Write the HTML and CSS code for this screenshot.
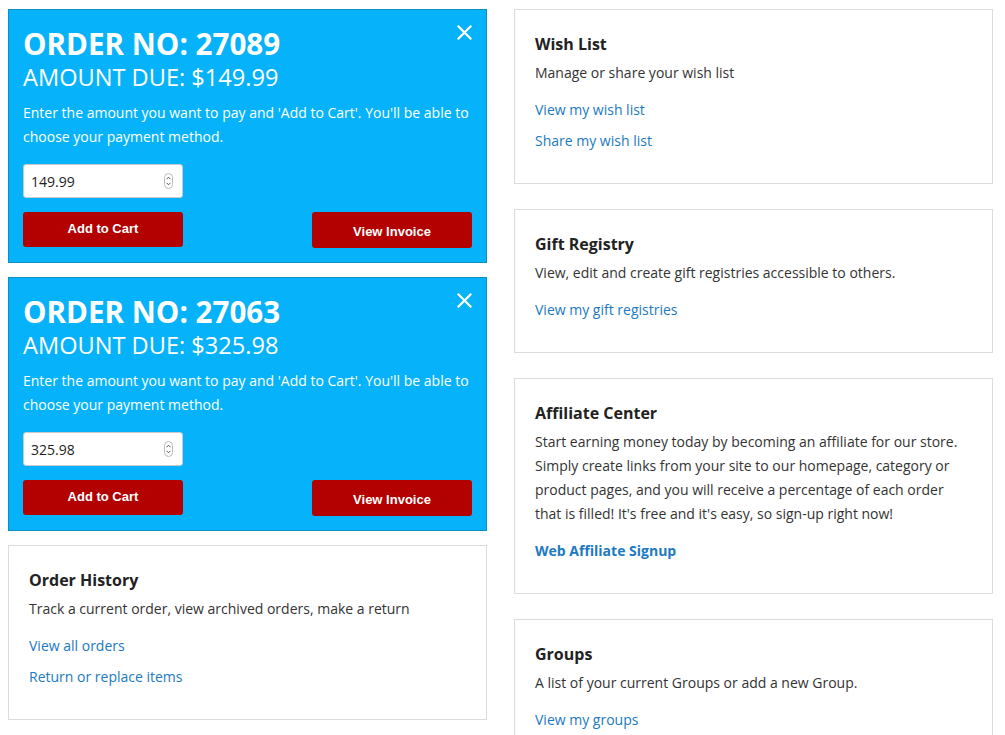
FILE: index.html
```html
<!DOCTYPE html>
<html lang="en">
<head>
<meta charset="utf-8">
<title>My Account</title>
<link rel="stylesheet" href="styles.css">
</head>
<body>
<div class="page">
  <div class="col">
    <div class="due-card">
      <span class="close"><svg width="15" height="15" viewBox="0 0 15 15"><path d="M1.5 1.5 L13.5 13.5 M13.5 1.5 L1.5 13.5" stroke="#fff" stroke-width="2.2" stroke-linecap="square"/></svg></span>
      <h2 class="order-no">ORDER NO: 27089</h2>
      <div class="amount">AMOUNT DUE: $149.99</div>
      <p class="note">Enter the amount you want to pay and 'Add to Cart'. You'll be able to choose your payment method.</p>
      <div class="qty"><input class="qty-input" type="text" value="149.99"><span class="spin"><svg width="9" height="16" viewBox="0 0 9 16"><rect x="0.5" y="0.5" width="8" height="15" rx="4" fill="#fff" stroke="#bbb"/><path d="M2.6 6.2 L4.5 4.2 L6.4 6.2 M2.6 9.8 L4.5 11.8 L6.4 9.8" fill="none" stroke="#555" stroke-width="1"/></svg></span></div>
      <div class="actions">
        <button class="btn">Add to Cart</button>
        <button class="btn btn-low">View Invoice</button>
      </div>
    </div>
    <div class="due-card">
      <span class="close"><svg width="15" height="15" viewBox="0 0 15 15"><path d="M1.5 1.5 L13.5 13.5 M13.5 1.5 L1.5 13.5" stroke="#fff" stroke-width="2.2" stroke-linecap="square"/></svg></span>
      <h2 class="order-no">ORDER NO: 27063</h2>
      <div class="amount">AMOUNT DUE: $325.98</div>
      <p class="note">Enter the amount you want to pay and 'Add to Cart'. You'll be able to choose your payment method.</p>
      <div class="qty"><input class="qty-input" type="text" value="325.98"><span class="spin"><svg width="9" height="16" viewBox="0 0 9 16"><rect x="0.5" y="0.5" width="8" height="15" rx="4" fill="#fff" stroke="#bbb"/><path d="M2.6 6.2 L4.5 4.2 L6.4 6.2 M2.6 9.8 L4.5 11.8 L6.4 9.8" fill="none" stroke="#555" stroke-width="1"/></svg></span></div>
      <div class="actions">
        <button class="btn">Add to Cart</button>
        <button class="btn btn-low">View Invoice</button>
      </div>
    </div>
    <div class="box">
      <h3 class="box-title">Order History</h3>
      <p class="box-text">Track a current order, view archived orders, make a return</p>
      <ul class="links">
        <li><a href="#">View all orders</a></li>
        <li><a href="#">Return or replace items</a></li>
      </ul>
    </div>
  </div>
  <div class="col col-right">
    <div class="box">
      <h3 class="box-title">Wish List</h3>
      <p class="box-text">Manage or share your wish list</p>
      <ul class="links">
        <li><a href="#">View my wish list</a></li>
        <li><a href="#">Share my wish list</a></li>
      </ul>
    </div>
    <div class="box">
      <h3 class="box-title">Gift Registry</h3>
      <p class="box-text">View, edit and create gift registries accessible to others.</p>
      <ul class="links">
        <li><a href="#">View my gift registries</a></li>
      </ul>
    </div>
    <div class="box">
      <h3 class="box-title">Affiliate Center</h3>
      <p class="box-text">Start earning money today by becoming an affiliate for our store. Simply create links from your site to our homepage, category or product pages, and you will receive a percentage of each order that is filled! It's free and it's easy, so sign-up right now!</p>
      <ul class="links">
        <li><a href="#" class="strong">Web Affiliate Signup</a></li>
      </ul>
    </div>
    <div class="box">
      <h3 class="box-title">Groups</h3>
      <p class="box-text">A list of your current Groups or add a new Group.</p>
      <ul class="links">
        <li><a href="#">View my groups</a></li>
      </ul>
    </div>
  </div>
</div>
</body>
</html>
```
FILE: styles.css
```css
* { box-sizing: border-box; }
html, body { margin: 0; padding: 0; background: #fff; }
body {
  font-family: "Open Sans", "DejaVu Sans", sans-serif;
  color: #222;
  overflow: hidden;
}
.page {
  display: grid;
  grid-template-columns: 479px 479px;
  column-gap: 27px;
  padding: 9px 0 0 8px;
  align-items: start;
}
.col { display: flex; flex-direction: column; gap: 14px; }
.col-right { gap: 25px; }

.due-card {
  position: relative;
  background: #06b3fb;
  border: 1px solid #0d8ec6;
  padding: 15px 14px 14px 14px;
  color: #fff;
}
.close {
  position: absolute;
  top: 15px;
  right: 14px;
  width: 15px;
  height: 15px;
  display: block;
  line-height: 0;
}
.order-no {
  margin: 0;
  font-size: 29.6px;
  font-weight: 700;
  line-height: 38px;
}
.amount {
  font-size: 23.6px;
  font-weight: 400;
  line-height: 28px;
}
.note {
  margin: 10px 0 0;
  font-size: 14px;
  line-height: 24px;
}
.qty {
  margin-top: 15px;
  width: 160px;
  height: 34px;
  background: #fff;
  border: 1px solid #c9c9c9;
  border-radius: 3px;
  display: flex;
  align-items: center;
  padding: 0 9px 0 7px;
}
.qty-input {
  flex: 1;
  min-width: 0;
  border: 0;
  outline: 0;
  padding: 0;
  font-family: "Open Sans", "DejaVu Sans", sans-serif;
  font-size: 14px;
  color: #222;
  background: transparent;
}
.spin { display: block; line-height: 0; }
.actions {
  margin-top: 14px;
  display: flex;
  justify-content: space-between;
}
.btn {
  width: 160px;
  height: 35px;
  background: #b30000;
  color: #fff;
  border: 0;
  border-radius: 3px;
  font-family: "Liberation Sans", Arial, sans-serif;
  font-weight: 700;
  font-size: 13px;
  padding: 0 0 2px;
}
.btn-low { height: 36px; padding: 2px 0 0; }

.box {
  border: 1px solid #dcdcdc;
  padding: 24px 20px 30px;
  background: #fff;
}
.box-title {
  margin: 0 0 7px;
  font-size: 16px;
  font-weight: 700;
  line-height: 20px;
  color: #222;
}
.box-text {
  margin: 0;
  font-size: 14px;
  line-height: 24px;
  color: #333;
}
.links {
  list-style: none;
  margin: 13px 0 0;
  padding: 0;
  display: flex;
  flex-direction: column;
  gap: 7px;
}
.links li { line-height: 24px; font-size: 14px; }
.links a { color: #2079c2; text-decoration: none; }
.links a.strong { font-weight: 700; }
```
